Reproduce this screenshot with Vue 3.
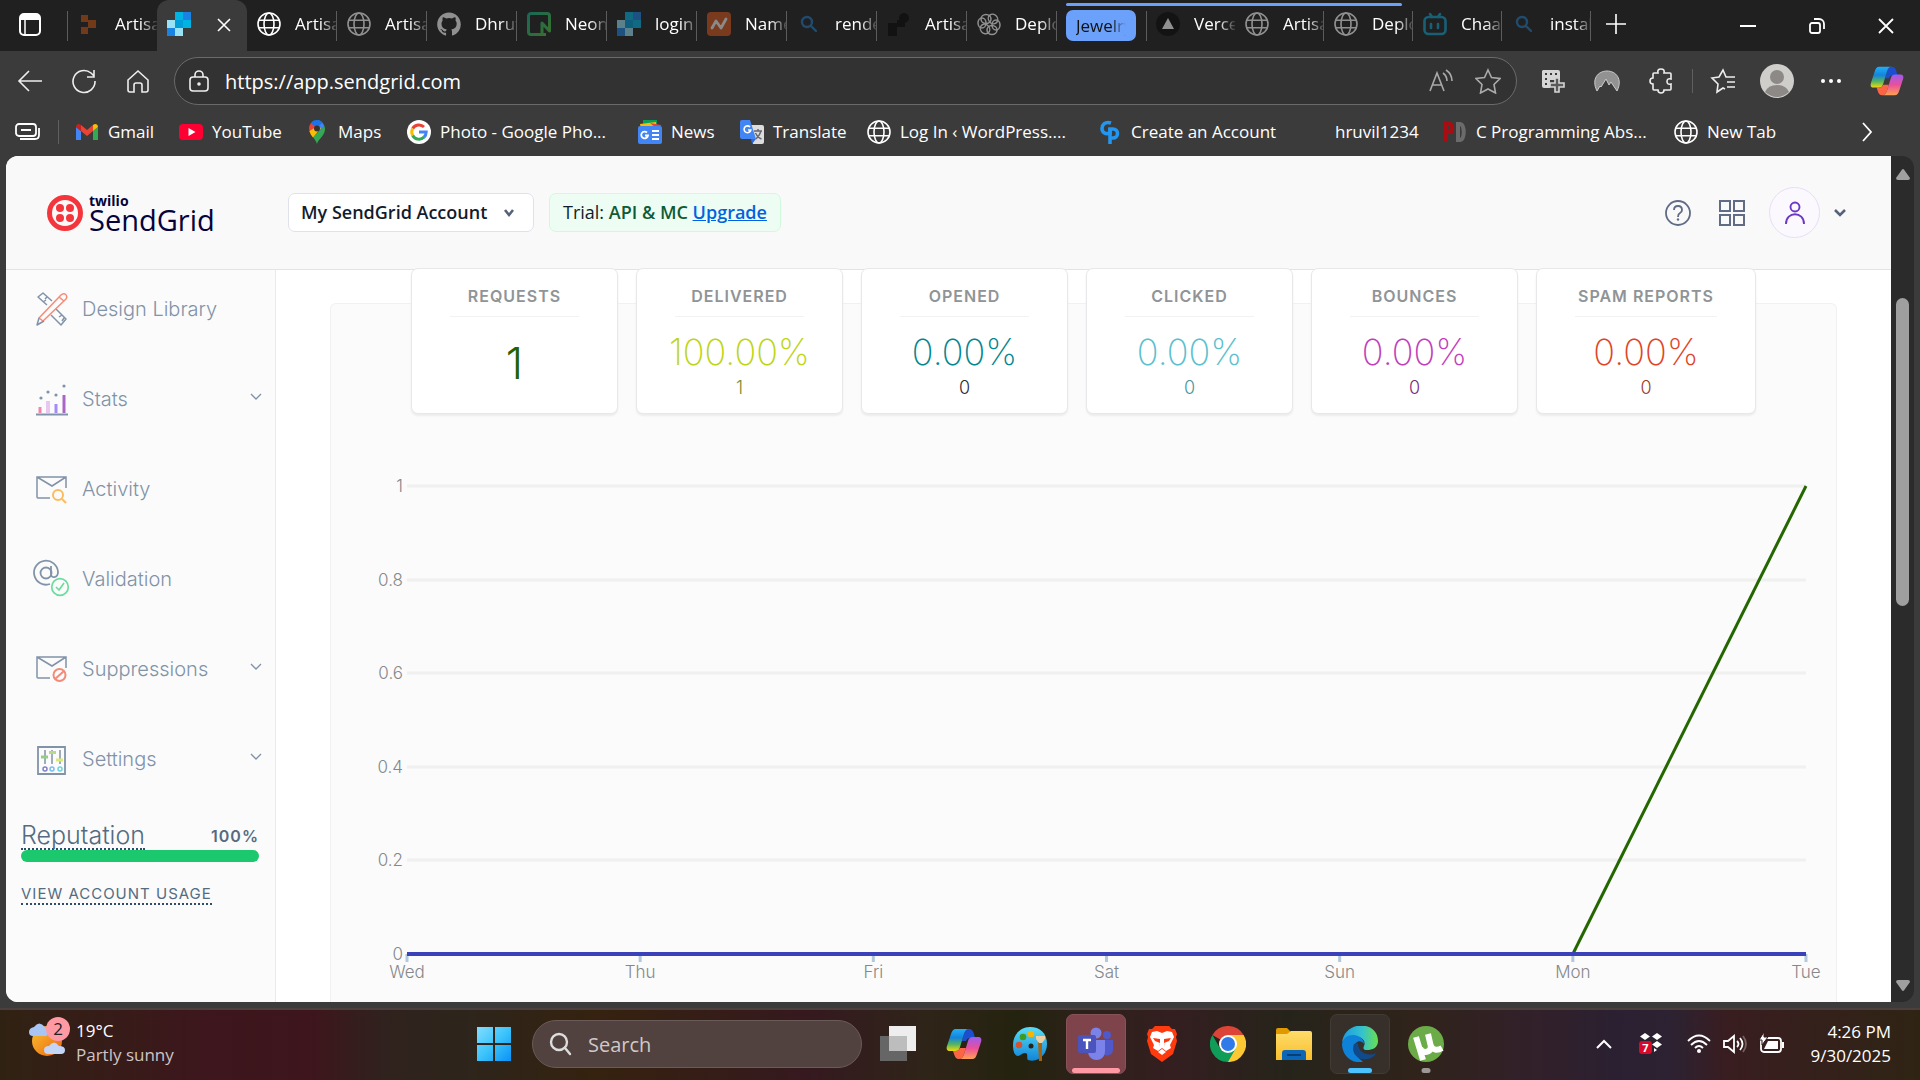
<script setup>
const globe = '<g fill="none" stroke="currentColor" stroke-width="1.6"><circle cx="12" cy="12" r="11"/><ellipse cx="12" cy="12" rx="5" ry="11"/><path d="M2 8.2h20M2 15.8h20"/></g>'
const grid = '<path fill="#1a82e2" d="M16 0h8v8h-8zM0 16h8v8H0z"/><path fill="#00b3e3" d="M8 0h8v8H8zM16 8h8v8h-8z"/><path fill="#009dd9" d="M8 8h8v8H8z"/><path fill="#99e1f4" d="M0 8h8v8H0zM8 16h8v8H8z"/>'
const search = '<g fill="none" stroke="#2277bb" stroke-width="2.4" stroke-linecap="round"><circle cx="10" cy="10" r="5"/><path d="M14 14l5 5"/></g>'
const copilot = '<path fill="#1b4fd0" d="M23 3c3 0 4 2 5 5l1 4h-5c-2 0-3 1-4 3h-4l2-7c1-3 2-5 5-5z"/><path fill="#fb6545" d="M13 33c-3 0-4-2-5-5l-1-3h2c3 0 4-1 5-3h6l-2 6c-1 3-2 5-5 5z"/><path fill="url(#cpA)" d="M10 3h13c-3 0-4 2-5 5l-4 13c-1 3-2 4-5 4H4c-3 0-4-2-3-5l4-12c1-3 2-5 5-5z"/><path fill="url(#cpB)" d="M26 33H13c3 0 4-2 5-5l4-13c1-3 2-4 5-4h5c3 0 4 2 3 5l-4 12c-1 3-2 5-5 5z"/>'

const icons = {
  globe, grid, search, copilot,
  render: '<path fill="#c65414" d="M4 3h7v7H4zM11 8h8v8h-8zM4 15h7v7H4z"/>',
  github: '<path fill="#fff" d="M12 .5C5.4.5.2 5.800.2 12.300c0 5.200 3.400 9.700 8.100 11.200.6.1.8-.2.8-.6v-2.200c-3.300.7-4-1.400-4-1.400-.5-1.400-1.300-1.700-1.300-1.700-1.100-.7.100-.7.100-.7 1.200.1 1.800 1.200 1.800 1.200 1 1.800 2.800 1.300 3.400 1 .1-.8.4-1.300.8-1.600-2.600-.3-5.400-1.300-5.400-5.900 0-1.300.5-2.400 1.200-3.200-.1-.3-.5-1.500.1-3.200 0 0 1-.3 3.300 1.200a11.400 11.400 0 0 1 6 0c2.300-1.500 3.300-1.200 3.300-1.200.6 1.700.2 2.900.1 3.200.8.8 1.200 1.900 1.200 3.200 0 4.600-2.800 5.600-5.500 5.900.4.4.8 1.100.8 2.200v3.300c0 .3.2.7.8.6a11.800 11.800 0 0 0 8-11.200C23.800 5.800 18.600.5 12 .5z"/>',
  neon: '<path fill="none" stroke="url(#neonG)" stroke-width="3" stroke-linejoin="round" d="M19 22.500H4a2.500 2.500 0 0 1-2.500-2.500V4A2.500 2.500 0 0 1 4 1.500h16A2.500 2.500 0 0 1 22.500 4v15L15 11v12"/>',
  name: '<rect width="24" height="24" rx="4" fill="#d2541c"/><path d="M5 16l4-7 5 7 5-9" fill="none" stroke="#f3f3f3" stroke-width="2.800" stroke-linecap="round" stroke-linejoin="round"/>',
  dark: '<path fill="#050505" d="M1 11h9v13H1zM10 8h8v7h-8z"/><circle cx="17" cy="6" r="5" fill="#050505"/>',
  openai: '<g fill="none" stroke="#fff" stroke-width="1.500"><ellipse cx="9" cy="7" rx="5" ry="4.500"/><ellipse cx="16" cy="7" rx="4.500" ry="5" transform="rotate(-40 16 7)"/><ellipse cx="19" cy="13" rx="4" ry="5"/><ellipse cx="15" cy="18" rx="5" ry="4.500"/><ellipse cx="8" cy="17" rx="4.500" ry="5" transform="rotate(-40 8 17)"/><ellipse cx="5" cy="11" rx="4" ry="5"/></g>',
  vercel: '<circle cx="12" cy="12" r="12" fill="#080808"/><path fill="#fff" d="M12 6l6 11H6z"/>',
  bili: '<g fill="none" stroke="#10a0cc" stroke-width="2.600" stroke-linecap="round"><rect x="1.500" y="5" width="21" height="17" rx="4"/><path d="M7 2l2 3M17 2l-2 3M8 12v4M15 12v4"/></g>',
  gmail: '<path fill="#4285f4" d="M1 20V7l5 4v9z"/><path fill="#34a853" d="M18 20v-9l5-4v13z"/><path fill="#ea4335" d="M6 11V5l6 5 6-5v6l-6 5z"/><path fill="#c5221f" d="M1 7c0-3 3-4 5-2v6z"/><path fill="#fbbc04" d="M23 7c0-3-3-4-5-2v6z"/>',
  youtube: '<rect y="4" width="24" height="16" rx="4" fill="#ff0033"/><path fill="#fff" d="M9.500 8l7 4-7 4z"/>',
  maps: '<path fill="#34a853" d="M12 24c1-5 8-8 8-15 0-1-.2-2-.6-3L8 17c2 3 3 4 4 7z"/><path fill="#4285f4" d="M12 0c3 0 6 2 7.400 6L14 12 9 6l5-6z"/><path fill="#1a73e8" d="M12 0c2 0 4 .8 5.400 2.500L9 11 5.600 3.500C7 1 9 0 12 0z"/><path fill="#ea4335" d="M5.800 3.300A8.500 8.500 0 0 0 4 9l1 3 6-5z"/><path fill="#fbbc04" d="M4.400 11c.6 2.600 2 4.400 3.600 6.500L16 8l-5-1z"/><circle cx="12" cy="8.500" r="3" fill="#333"/>',
  google: '<circle cx="12" cy="12" r="12" fill="#fff"/><g fill="none" stroke-width="3"><path stroke="#ea4335" d="M5.700 8.500A7.200 7.200 0 0 1 17 7"/><path stroke="#fbbc04" d="M5.700 15.500a7.200 7.200 0 0 1 0-7"/><path stroke="#34a853" d="M5.700 15.500A7.200 7.200 0 0 0 17 17.200"/><path stroke="#4285f4" d="M12 12h7.200a7.200 7.200 0 0 1-2.300 5.300"/></g>',
  news: '<path fill="#0c9d58" d="M5 0h14v8H5z"/><path fill="#fbbc04" d="M2 4l16-2v8H3z"/><path fill="#ea4335" d="M12 3l11 2-2 6z"/><rect y="6" width="24" height="18" rx="2" fill="#4285f4"/><path d="M14 11h7M14 15h7M14 19h7M9 12.500a3.400 3.400 0 1 0 1 3H7" stroke="#fff" stroke-width="1.800" fill="none"/>',
  translate: '<path fill="#ddd" d="M10 5h12a2 2 0 0 1 2 2v15a2 2 0 0 1-2 2h-9z"/><path fill="#4285f4" d="M2 0h8l6 19H2a2 2 0 0 1-2-2V2a2 2 0 0 1 2-2z"/><path fill="#3367d6" d="M11 19h5l-4 5z"/><path d="M10 7a3.400 3.400 0 1 0 .8 3H8" stroke="#fff" stroke-width="1.600" fill="none"/><path d="M14 11h8M18 9v2M21 11c-1 4-3 6-5 8M15.500 13c1 2 3 5 6 6" stroke="#667" stroke-width="1.500" fill="none"/>',
  gp: '<g fill="none" stroke="#2196f3" stroke-width="3.600"><path d="M13 3C7 1 4 5 4 8.500S7 15 12 13V8"/><path d="M12 24V9h3a4.500 4.500 0 1 1 0 9h-3"/></g>',
  blank: '',
  pd: '<path fill="none" stroke="#a90d12" stroke-width="4" d="M3 22V4h4c3 0 3 8 0 8H3"/><path fill="none" stroke="#6b6b6b" stroke-width="4" d="M15 4v16h2c5 0 5-16 0-16z"/>',
}

const tabsBefore = [
  { icon: 'render', title: 'Artisan', dim: true },
  { icon: 'grid', title: '', active: true },
  { icon: 'globe', title: 'Artisan' },
  { icon: 'globe', title: 'Artisan', dim: true },
  { icon: 'github', title: 'Dhruvil', dim: true },
  { icon: 'neon', title: 'Neon', dim: true },
  { icon: 'grid', title: 'login', dim: true },
  { icon: 'name', title: 'Name', dim: true },
  { icon: 'search', title: 'render', dim: true },
  { icon: 'dark', title: 'Artisan', dim: true },
  { icon: 'openai', title: 'Deploy', dim: true },
]
const tabsGroup = [
  { icon: 'vercel', title: 'Vercel', dim: true },
  { icon: 'globe', title: 'Artisan', dim: true },
  { icon: 'globe', title: 'Deploy', dim: true },
]
const tabsAfter = [
  { icon: 'bili', title: 'Chaarts', dim: true },
  { icon: 'search', title: 'install', dim: true },
]
const bookmarks = [
  { icon: 'gmail', title: 'Gmail', w: 104 },
  { icon: 'youtube', title: 'YouTube', w: 126 },
  { icon: 'maps', title: 'Maps', w: 102 },
  { icon: 'google', title: 'Photo - Google Pho...', w: 231 },
  { icon: 'news', title: 'News', w: 102 },
  { icon: 'translate', title: 'Translate', w: 127 },
  { icon: 'globe', title: 'Log In ‹ WordPress....', w: 231 },
  { icon: 'gp', title: 'Create an Account', w: 204 },
  { icon: 'blank', title: 'hruvil1234', w: 141 },
  { icon: 'pd', title: 'C Programming Abs...', w: 231 },
  { icon: 'globe', title: 'New Tab', w: 110 },
]

const envelope = '<path d="M35 21V10H6v20a1 1 0 0 0 1 1h12M6 10l15 9 14-9"/>'
const nav = [
  { title: 'Design Library', art: '<g stroke-linejoin="round"><path d="M16 18L7 10l5-4 9 8M25 22l10 10-5 6-10-10M12 15l3-2M14 12l2-2M28 30l3-2M31 34l2-3"/><path stroke="#f58b78" fill="#fbfbfb" d="M30 8L8 31l4 3L35 12q2-3-1-5-2-1-4 1zM28 10l5 4"/><path d="M8 31l-2 7 7-4"/></g>' },
  { title: 'Stats', sub: true, art: '<path d="M5 37.500h32" stroke-width="2"/><path d="M9 36V30" stroke="#f286ac" stroke-width="3"/><path d="M17 36V24" stroke="#e8c8f2" stroke-width="4"/><path d="M25 36v-9" stroke="#a58bfa" stroke-width="3"/><path d="M33 36V18" stroke="#aa66c4" stroke-width="3"/><g fill="#8193a8" stroke="none"><circle cx="10" cy="21" r="1.600"/><circle cx="17" cy="15" r="1.600"/><circle cx="25" cy="18" r="1.600"/><circle cx="33" cy="9" r="1.600"/></g>' },
  { title: 'Activity', art: envelope + '<g stroke="#fcbb5c" stroke-width="2"><circle cx="27" cy="28" r="5"/><path d="M31 32l4 4"/></g>' },
  { title: 'Validation', art: '<g stroke-width="1.800"><path d="M19 27A12 12 0 1 1 27 15c0 6-7 7-7 2v-8"/><circle cx="15" cy="16" r="5.500"/></g><g stroke="#6cdc9d" stroke-width="1.700"><circle cx="29" cy="30" r="8.300"/><path d="M25 30l3 3 5-7"/></g>' },
  { title: 'Suppressions', sub: true, art: envelope + '<g stroke="#f28c78" stroke-width="2"><circle cx="28.500" cy="28" r="6"/><path d="M24 32l9-8"/></g>' },
  { title: 'Settings', sub: true, art: '<path d="M7 10h27v27H7z" stroke-width="1.800"/><path d="M14 13v14M21 13v14M29 13v14"/><path d="M10 20h7" stroke="#92cf86" stroke-width="3"/><path d="M18 15.500h7" stroke="#b8da87" stroke-width="3"/><path d="M25 23h7" stroke="#dce878" stroke-width="3"/><circle cx="14" cy="32" r="2" stroke="#8080ca"/><circle cx="21" cy="32" r="2" stroke="#79bdf2"/><circle cx="29" cy="32" r="2" stroke="#68d6dc"/>' },
]

const stats = [
  { label: 'Requests', value: '1', color: '#246100', single: true },
  { label: 'Delivered', value: '100.00%', count: '1', color: '#bcd514', tone: '#7f8c30' },
  { label: 'Opened', value: '0.00%', count: '0', color: '#028690', tone: '#302b3a' },
  { label: 'Clicked', value: '0.00%', count: '0', color: '#59c0cf', tone: '#4b97a0' },
  { label: 'Bounces', value: '0.00%', count: '0', color: '#bf3ebc', tone: '#7c2c7a' },
  { label: 'Spam Reports', value: '0.00%', count: '0', color: '#e04427', tone: '#97402f', wide: true },
]
const days = ['Wed', 'Thu', 'Fri', 'Sat', 'Sun', 'Mon', 'Tue']
const levels = ['1', '0.8', '0.6', '0.4', '0.2', '0']
const plotH = 468
const levelY = (i) => Math.round((plotH * i) / 5)
const dayX = (i) => (i * 100) / 6 + '%'

const apps = [
  { name: 'Task View', art: '<path fill="#666" d="M0 10h27v25H0z"/><path fill="#eee" d="M9 0h27v25H9z"/><path fill="#bdbdbd" d="M9 10h18v15H9z"/>' },
  { name: 'Copilot', art: copilot },
  { name: 'Paint', art: '<path fill="url(#paintG)" d="M18 1C8 1 1 9 1 19c0 7 2 11 5 11 2 0 4-3 7-3 4 0 1 5 3 7 10 3 19-5 19-16S28 1 18 1z"/><circle cx="19" cy="20" r="2.500" fill="#26241c"/><circle cx="7" cy="19" r="3.300" fill="#d9502b"/><circle cx="11" cy="11" r="3.300" fill="#3e9b22"/><circle cx="19" cy="8" r="3.300" fill="#f7b500"/><path fill="#a8620e" d="M26 15h4v20h-3z"/><path fill="#ecd0a5" d="M24 10h9v3l-3 4h-3l-3-4z"/>' },
  { name: 'Teams', state: 'alert', art: '<circle cx="29" cy="9" r="4" fill="#5059c9"/><path fill="#5059c9" d="M24 14h11v9c0 8-9 8-11 3z"/><circle cx="18" cy="7" r="5.500" fill="#7b83eb"/><path fill="#7b83eb" d="M10 14h17v11c0 12-17 12-17 0z"/><rect y="9" width="18" height="18" rx="2" fill="#4b53bc"/><path stroke="#fff" stroke-width="2.400" d="M5 14h8M9 14v9"/>' },
  { name: 'Brave', art: '<path fill="#ff3a0e" d="M11 0h14l3 3 3 0 2 5-1 3 1 4-4 13-11 8-11-8L3 15l1-4-1-3 2-5h3z"/><path fill="#fff" d="M18 7l5-2 5 1 2 5-4 8 1 3-5 3-4-3-4 3-5-3 1-3-4-8 2-5 5-1zM18 23l4 3-4 3-4-3z"/><path fill="#ff3a0e" d="M9 12l7 1 0 5-1 3 1-4-5-2zM27 12l-7 1 0 5 1 3-1-4 5-2z"/>' },
  { name: 'Chrome', art: '<path fill="#db4437" d="M18 18L2.400 9a18 18 0 0 1 31.200 0z"/><path fill="#fcc934" d="M18 9h15.600A18 18 0 0 1 17 36l8-14z"/><path fill="#0f9d58" d="M2.400 9l8 14 8 4 7-4-7.400 13A18 18 0 0 1 2.400 9z"/><circle cx="18" cy="18" r="9" fill="#fff"/><circle cx="18" cy="18" r="7" fill="#2f7ae8"/>' },
  { name: 'File Explorer', art: '<path fill="#e09a00" d="M0 4q0-2 2-2h9l4 4-4 4H0z"/><path fill="url(#foldG)" d="M0 8h11l4-3h19q2 0 2 2v27H0z"/><path fill="#0c66b8" d="M6 34V27q0-3 3-3h18q3 0 3 3v7z"/><path stroke="#0a3d73" stroke-width="2" d="M11 29h14"/>' },
  { name: 'Edge', state: 'current', art: '<path fill="url(#edgeG)" d="M0 17C2-6 36-6 36 15c0 7-6 9-11 9-4 0-4-2-3-4 2-4-1-9-7-9C7 11 1 13 0 17z"/><path fill="#0d82d8" d="M0 18c1-6 6-9 11-9 6 0 11 4 11 9-3-5-9-3-10 3-1 7 5 11 9 15C9 38 0 29 0 18z"/><path fill="#114a8b" d="M12 18c-4 9 5 19 17 14 2-1 4-3 5-5-8 4-18 0-18-10z"/>' },
  { name: 'uTorrent', state: 'idle', art: '<circle cx="18" cy="18" r="18" fill="#6cac48"/><path fill="none" stroke="#fff" stroke-width="6" d="M8 11l7 23M12 22c2 6 10 5 11-1l-3-13M23 20c2 4 6 5 11 2"/>' },
]
</script>

<template>
  <div class="desktop">
    <svg class="defs" aria-hidden="true">
      <defs>
        <linearGradient id="cpA" x1="0" y1="0" x2="0" y2="1"><stop offset="0" stop-color="#1fb0f8" /><stop offset=".4" stop-color="#1483dc" /><stop offset=".7" stop-color="#55b560" /><stop offset="1" stop-color="#f5d90e" /></linearGradient>
        <linearGradient id="cpB" x1="0" y1="0" x2="0" y2="1"><stop offset="0" stop-color="#9a5cf0" /><stop offset=".5" stop-color="#e94f9c" /><stop offset="1" stop-color="#ffa052" /></linearGradient>
        <linearGradient id="neonG" x1="0" y1="0" x2="1" y2="1"><stop offset="0" stop-color="#15b08c" /><stop offset="1" stop-color="#52c13d" /></linearGradient>
        <linearGradient id="paintG" x1="0" y1="0" x2="0" y2="1"><stop offset="0" stop-color="#5adcf5" /><stop offset="1" stop-color="#1086d8" /></linearGradient>
        <linearGradient id="foldG" x1="0" y1="0" x2="0" y2="1"><stop offset="0" stop-color="#ffdc6b" /><stop offset="1" stop-color="#f8bf2c" /></linearGradient>
        <linearGradient id="edgeG" x1="0" y1="0" x2="1" y2="0"><stop offset="0" stop-color="#1a9be0" /><stop offset=".55" stop-color="#35c1d0" /><stop offset="1" stop-color="#68e04d" /></linearGradient>
        <linearGradient id="winG" x1="0" y1="0" x2="1" y2="1"><stop offset="0" stop-color="#83ddff" /><stop offset=".5" stop-color="#3cc4fb" /><stop offset="1" stop-color="#0a92f7" /></linearGradient>
        <linearGradient id="sunG" x1="0" y1="0" x2="1" y2="1"><stop offset="0" stop-color="#f7c331" /><stop offset="1" stop-color="#ee6410" /></linearGradient>
      </defs>
    </svg>

    <header class="tabstrip">
      <button class="tab-menu" aria-label="Tab actions">
        <svg width="22" height="28" viewBox="0 0 22 28"><rect x="1" y="3" width="20" height="21" rx="4" fill="none" stroke="#fff" stroke-width="2" /><path fill="#fff" d="M1 4h20v5H1z" /><path stroke="#fff" stroke-width="1.500" d="M6 8v15" /></svg>
      </button>
      <button v-for="(t, i) in tabsBefore" :key="'b' + i" class="tab" :class="{ active: t.active, dim: t.dim }" :aria-label="t.title || 'SendGrid'">
        <svg width="24" height="24" viewBox="0 0 24 24" v-html="icons[t.icon]"></svg>
        <svg v-if="t.active" class="tab-close" width="14" height="14" viewBox="0 0 14 14"><path d="M1 1l12 12M13 1L1 13" stroke="#fff" stroke-width="1.600" /></svg>
        <span v-else class="tab-title">{{ t.title }}</span>
      </button>
      <div class="tab-group">
        <button class="group-pill"><span>Jewelry</span></button>
        <button v-for="(t, i) in tabsGroup" :key="'g' + i" class="tab grouped" :class="{ dim: t.dim }">
          <svg width="24" height="24" viewBox="0 0 24 24" v-html="icons[t.icon]"></svg>
          <span class="tab-title">{{ t.title }}</span>
        </button>
      </div>
      <button v-for="(t, i) in tabsAfter" :key="'a' + i" class="tab grouped" :class="{ dim: t.dim }">
        <svg width="24" height="24" viewBox="0 0 24 24" v-html="icons[t.icon]"></svg>
        <span class="tab-title">{{ t.title }}</span>
      </button>
      <button class="new-tab" aria-label="New tab"><svg width="22" height="22" viewBox="0 0 22 22"><path d="M11 1v20M1 11h20" stroke="#fff" stroke-width="1.600" /></svg></button>
      <div class="window-controls">
        <button aria-label="Minimize"><svg width="16" height="16" viewBox="0 0 16 16"><path d="M0 8h16" stroke="#fff" stroke-width="2" /></svg></button>
        <button aria-label="Restore"><svg width="16" height="16" viewBox="0 0 16 16"><g fill="none" stroke="#fff" stroke-width="1.800"><rect x="1" y="5" width="10" height="10" rx="2" /><path d="M5 1h5a5 5 0 0 1 5 5v5" /></g></svg></button>
        <button aria-label="Close"><svg width="16" height="16" viewBox="0 0 16 16"><path d="M1 1l14 14M15 1L1 15" stroke="#fff" stroke-width="1.800" /></svg></button>
      </div>
    </header>

    <div class="toolbar">
      <button class="tool" aria-label="Back"><svg width="26" height="26" viewBox="0 0 26 26"><path d="M25 13H2M12 3L2 13l10 10" /></svg></button>
      <button class="tool" aria-label="Refresh"><svg width="26" height="26" viewBox="0 0 26 26"><path d="M24 13A11 11 0 1 1 20 5l3 3M23 2v7h-7" /></svg></button>
      <button class="tool" aria-label="Home"><svg width="26" height="26" viewBox="0 0 26 26"><path d="M3 12L13 3l10 9v10q0 2-2 2h-4v-7q0-2-2-2h-4q-2 0-2 2v7H5q-2 0-2-2z" /></svg></button>
      <label class="address">
        <svg width="20" height="22" viewBox="0 0 20 22"><rect x="1" y="7" width="18" height="14" rx="3" /><path d="M6 7V5a4 4 0 0 1 8 0v2" /><circle cx="10" cy="14" r="1" fill="#ddd" /></svg>
        <input type="text" value="https://app.sendgrid.com" aria-label="Address" />
        <svg class="soft" width="24" height="24" viewBox="0 0 24 24"><path d="M1 22L8 4l7 18M4 16h9M14 4q4 3 4 8M17 1q6 4 6 11" /></svg>
        <svg class="soft" width="26" height="26" viewBox="0 0 26 26"><path d="M13 2l3.500 7.500 8.500 1-6 6 1.500 8.500L13 21l-7.500 4L7 16.500l-6-6 8.500-1z" /></svg>
      </label>
      <div class="extensions">
        <button class="tool" aria-label="Screenshot"><svg width="24" height="24" viewBox="0 0 24 24"><path fill="#d6d6d6" stroke="none" d="M2 1h15q2 0 2 2v8H9v8H3q-2 0-2-2V2z" /><path fill="#3b3b3b" stroke="none" d="M4 4h2v2H4zM9 4h2v2H9zM14 4h2v2h-2zM4 9h2v2H4zM4 14h2v2H4z" /><path fill="#5a5a5a" stroke="#d6d6d6" d="M14 9h4v5h5v4h-5v5h-4v-5H9v-4h5z" /></svg></button>
        <button class="tool" aria-label="VPN"><svg width="26" height="24" viewBox="0 0 26 24"><path fill="#929292" stroke="#ccc" stroke-width="1" d="M3 22C-3 10 4 2 13 2s16 8 10 20l-6-9-2 3-3-6-5 8-1-1z" /></svg></button>
        <button class="tool" aria-label="Extensions"><svg width="24" height="26" viewBox="0 0 24 26"><path d="M5 5h4q-1-4 3-4t3 4h6q1 0 1 1v5q-4-1-4 2.500t4 2.500v5q0 1-1 1h-6q0 3-3 3t-3-3H5q-1 0-1-1v-5q-3 0-3-3t3-3V6q0-1 1-1z" /></svg></button>
        <span class="rule"></span>
        <button class="tool" aria-label="Favorites"><svg width="26" height="26" viewBox="0 0 26 26"><path d="M15 21l-2-1-6 4 1-8-6-6 7-1 4-7 3 7 2 0M17 9h8M17 14h8M17 19h8" /></svg></button>
        <button class="tool" aria-label="Profile"><svg width="34" height="34" viewBox="0 0 34 34"><circle cx="17" cy="17" r="17" fill="#cfcecb" stroke="none" /><circle cx="17" cy="13" r="7" fill="#8c8986" stroke="none" /><path fill="#8c8986" stroke="none" d="M5 28q3-7 12-7t12 7q-12 10-24 0z" /></svg></button>
        <button class="tool" aria-label="More"><svg width="22" height="6" viewBox="0 0 22 6"><g fill="#fff" stroke="none"><circle cx="3" cy="3" r="2" /><circle cx="11" cy="3" r="2" /><circle cx="19" cy="3" r="2" /></g></svg></button>
        <button class="tool plain" aria-label="Copilot"><svg width="34" height="34" viewBox="0 0 36 36" v-html="copilot"></svg></button>
      </div>
    </div>

    <nav class="bookmarks" aria-label="Favorites bar">
      <button class="workspace" aria-label="Workspaces"><svg width="26" height="20" viewBox="0 0 26 20"><g fill="none" stroke="#fff" stroke-width="1.800"><rect x="1" y="2" width="20" height="12" rx="3" /><path d="M5 17h15q4 0 4-4V6M6 8h10" /></g></svg></button>
      <a v-for="b in bookmarks" :key="b.title" href="#" :style="{ width: b.w + 'px' }">
        <svg width="24" height="24" viewBox="0 0 24 24" v-html="icons[b.icon]"></svg><span>{{ b.title }}</span>
      </a>
      <button class="more" aria-label="More favorites"><svg width="12" height="20" viewBox="0 0 12 20"><path d="M2 1l8 9-8 9" fill="none" stroke="#fff" stroke-width="1.800" /></svg></button>
    </nav>

    <div class="viewport">
      <div class="page">
        <header class="app-header">
          <a class="logo" href="#" aria-label="Twilio SendGrid">
            <svg width="36" height="36" viewBox="0 0 36 36"><circle cx="18" cy="18" r="15.500" fill="none" stroke="#f4353b" stroke-width="5" /><g fill="#f4353b"><circle cx="13" cy="13" r="4" /><circle cx="23" cy="13" r="4" /><circle cx="13" cy="23" r="4" /><circle cx="23" cy="23" r="4" /></g></svg>
            <span class="wordmark"><b>twilio</b><span>SendGrid</span></span>
          </a>
          <label class="account">
            <select aria-label="Account"><option>My SendGrid Account</option></select>
            <svg width="12" height="10" viewBox="0 0 12 10"><path d="M2 2l4 5 4-5" /></svg>
          </label>
          <p class="trial">Trial: <b>API &amp; MC</b> <a href="#">Upgrade</a></p>
          <div class="header-actions">
            <button aria-label="Help"><svg width="26" height="26" viewBox="0 0 26 26"><g fill="none" stroke="#606b85" stroke-width="1.800"><circle cx="13" cy="13" r="12" /><path d="M9 10q0-4 4-4t4 4q0 2-2 3t-2 4" /></g><circle cx="13" cy="19.500" r="1.200" fill="#606b85" /></svg></button>
            <button aria-label="Products"><svg width="28" height="28" viewBox="0 0 28 28"><path fill="none" stroke="#606b85" stroke-width="2" d="M2 2h10v10H2zM16 2h10v10H16zM2 16h10v10H2zM16 16h10v10H16z" /></svg></button>
            <button class="avatar" aria-label="Account menu"><svg width="22" height="24" viewBox="0 0 22 24"><g fill="none" stroke="#6b37c8" stroke-width="1.900"><circle cx="11" cy="6" r="4.500" /><path d="M2 23c0-13 18-13 18 0" /></g></svg></button>
            <svg class="caret" width="14" height="10" viewBox="0 0 14 10"><path d="M2 2l5 5 5-5" /></svg>
          </div>
        </header>

        <div class="app-body">
          <aside class="sidebar">
            <nav>
              <a v-for="n in nav" :key="n.title" href="#">
                <svg class="nav-icon" width="40" height="44" viewBox="0 0 40 44" v-html="n.art"></svg>
                <span>{{ n.title }}</span>
                <svg v-if="n.sub" class="nav-caret" width="12" height="10" viewBox="0 0 12 10"><path d="M1 2l5 5 5-5" /></svg>
              </a>
            </nav>
            <section class="reputation">
              <div class="rep-head"><a href="#">Reputation</a><strong>100%</strong></div>
              <div class="rep-bar"></div>
              <a class="usage" href="#">VIEW ACCOUNT USAGE</a>
            </section>
          </aside>

          <main class="content">
            <section class="panel">
              <div class="cards">
                <article v-for="s in stats" :key="s.label" class="card" :class="{ wide: s.wide }">
                  <h2>{{ s.label }}</h2>
                  <p class="value" :class="{ single: s.single }" :style="{ color: s.color }">{{ s.value }}</p>
                  <p v-if="s.count" class="count" :style="{ color: s.tone }">{{ s.count }}</p>
                </article>
              </div>
              <svg class="chart" width="100%" height="500" role="img" aria-label="Email activity">
                <g v-for="(l, i) in levels" :key="l">
                  <line x1="0" x2="100%" :y1="levelY(i)" :y2="levelY(i)" stroke="#f0f0f0" stroke-width="3" />
                  <text x="-4" :y="levelY(i) + 6" text-anchor="end">{{ l }}</text>
                </g>
                <g v-for="(d, i) in days" :key="d">
                  <line :x1="dayX(i)" :x2="dayX(i)" :y1="plotH" :y2="plotH + 8" stroke="#b1c8dd" stroke-width="3" />
                  <text :x="dayX(i)" :y="plotH + 24" text-anchor="middle">{{ d }}</text>
                </g>
                <line :x1="dayX(5)" :y1="plotH" x2="100%" y2="0" stroke="#246600" stroke-width="3" />
                <line x1="0" x2="100%" :y1="plotH" :y2="plotH" stroke="#3b41b8" stroke-width="4" />
              </svg>
            </section>
          </main>
        </div>
      </div>
      <div class="scrollbar" aria-hidden="true">
        <svg width="14" height="11" viewBox="0 0 14 11"><path fill="#a0a0a0" d="M7 0q1 0 2 2l5 7q0 2-2 2H2q-2 0-2-2l5-7q1-2 2-2z" /></svg>
        <span class="thumb"></span>
        <svg width="14" height="11" viewBox="0 0 14 11"><path fill="#a0a0a0" d="M7 11q1 0 2-2l5-7q0-2-2-2H2Q0 0 0 2l5 7q1 2 2 2z" /></svg>
      </div>
    </div>

    <footer class="taskbar">
      <button class="weather">
        <span class="weather-icon">
          <svg width="38" height="38" viewBox="0 0 38 38"><circle cx="18" cy="18" r="15" fill="url(#sunG)" /><path fill="#a9c5f4" d="M4 13q-4 0-4-4t5-5q5-7 11 0 6 9-1 9z" /><path fill="#c3d6f7" d="M19 31q-4 0-4-4t5-4q5-7 10 0 6 0 6 4t-4 4z" /></svg>
          <span class="badge">2</span>
        </span>
        <span class="weather-text"><span>19°C</span><small>Partly sunny</small></span>
      </button>
      <div class="dock">
        <button class="app" aria-label="Start"><svg width="36" height="36" viewBox="0 0 36 36"><path fill="url(#winG)" d="M1 1h16v16H1zM19 1h16v16H19zM1 19h16v16H1zM19 19h16v16H19z" /></svg></button>
        <label class="search">
          <svg width="24" height="24" viewBox="0 0 24 24"><g fill="none" stroke="#ddd" stroke-width="2.400" stroke-linecap="round"><circle cx="10" cy="10" r="8" /><path d="M16 16l5 6" /></g></svg>
          <input type="text" placeholder="Search" aria-label="Search" />
        </label>
        <button v-for="a in apps" :key="a.name" class="app" :class="a.state" :aria-label="a.name">
          <svg width="36" height="36" viewBox="0 0 36 36" v-html="a.art"></svg>
        </button>
      </div>
      <div class="tray">
        <svg width="16" height="10" viewBox="0 0 16 10"><path d="M1 9l7-7 7 7" fill="none" stroke="#fff" stroke-width="2" /></svg>
        <span class="dropbox">
          <svg width="24" height="24" viewBox="0 0 24 24"><path fill="#fff" d="M6 1l5 3.500L6 8 1 4.500zM18 1l5 3.500L18 8l-5-3.500zM18 9l5 3.500-5 3.500-5-3.500zM15 16l3 2-3 2z" /></svg>
          <b>7</b>
        </span>
        <span class="status">
          <svg width="24" height="24" viewBox="0 0 24 24"><g fill="none" stroke="#fff" stroke-width="1.800"><path d="M1 9q11-11 22 0M4 13q8-8 16 0M8 16q4-4 8 0" /></g><circle cx="12" cy="19" r="2" fill="#fff" /></svg>
          <svg width="24" height="24" viewBox="0 0 24 24"><g fill="none" stroke="#fff" stroke-width="1.800"><path d="M1 9v6h4l6 5V4L5 9zM14 9q3 3 0 6M17 6q5 6 0 12" /><path opacity=".3" d="M20 4q6 8 0 16" /></g></svg>
          <svg width="26" height="24" viewBox="0 0 26 24"><rect x="2" y="6" width="20" height="14" rx="3" fill="none" stroke="#fff" stroke-width="1.800" /><path fill="#fff" d="M9 9h10v8H5zM23 10h2v6h-2z" /><path fill="#fff" stroke="#2e1c1a" d="M5 0v5h4L3 13V8H0z" /></svg>
        </span>
        <span class="clock"><span>4:26 PM</span><span>9/30/2025</span></span>
      </div>
    </footer>
  </div>
</template>

<style>
body { margin: 0; }
</style>

<style scoped>
* { box-sizing: border-box; }
button { border: 0; padding: 0; background: none; color: inherit; font: inherit; }
a { color: inherit; text-decoration: none; }
p, h2 { margin: 0; }
svg { flex: none; display: block; }
.defs { position: absolute; width: 0; height: 0; }

.desktop { min-height: 100vh; display: flex; flex-direction: column; background: #3b3b3b; color: #fff; font-family: "Open Sans", "Noto Sans", sans-serif; font-size: 17px; overflow: hidden; }

.tabstrip { height: 51px; display: flex; background: #202020; }
.tab-menu { width: 67px; padding: 10px 0 0 19px; }
.tab-menu svg { margin-bottom: 12px; }
.tab { position: relative; width: 90px; padding: 0 0 4px 10px; display: flex; align-items: center; gap: 14px; white-space: nowrap; }
.tab.grouped { width: 89px; }
.tab::after { content: ""; position: absolute; right: 0; top: 11px; width: 1px; height: 30px; background: #5c5c5c; }
.tab:nth-child(2)::before { content: ""; position: absolute; left: 0; top: 11px; width: 1px; height: 30px; background: #5c5c5c; }
.tab:nth-child(2)::after, .tab.active::after { display: none; }
.tab.dim > svg { opacity: 0.5; }
.tab-title { flex: 1; overflow: hidden; text-align: left; mask-image: linear-gradient(90deg, #000 60%, transparent 105%); }
.tab.active { background: #3b3b3b; border-radius: 12px 12px 0 0; gap: 26px; }
.tab-close { margin-top: 3px; }
.tab-group { position: relative; display: flex; }
.tab-group::before { content: ""; position: absolute; left: 9px; right: 11px; top: 3px; height: 3px; border-radius: 2px; background: #6ba1fb; }
.group-pill { width: 70px; height: 31px; margin: 10px 10px 0 9px; padding: 0 10px; overflow: hidden; border-radius: 7px; background: #6ba1fb; color: #111; text-align: left; }
.group-pill span { display: block; overflow: hidden; mask-image: linear-gradient(90deg, #000 70%, transparent); }
.new-tab { padding: 0 14px 4px; }
.window-controls { display: flex; margin-left: auto; }
.window-controls button { width: 69px; display: grid; place-items: center; }

.toolbar { display: flex; align-items: center; height: 60px; padding: 0 5px 0 3px; }
.tool { width: 54px; height: 48px; display: grid; place-items: center; }
.tool svg, .address svg { fill: none; stroke: #eee; stroke-width: 1.6; }
.tool.plain { width: 57px; }
.tool.plain svg { stroke: none; }
.address { flex: 1; height: 48px; margin: 0 9px; padding: 0 15px 0 14px; display: flex; align-items: center; border: 1px solid #6a6a6a; border-radius: 24px; background: #323232; }
.address input { flex: 1; min-width: 0; margin-left: 16px; padding: 0; border: 0; outline: 0; background: none; color: #fff; font: inherit; font-size: 20px; }
.address .soft { stroke: #aaa; margin-left: 22px; }
.extensions { display: flex; align-items: center; }
.rule { width: 1px; height: 24px; margin: 0 3px 0 4px; background: #5f5f5f; }

.bookmarks { display: flex; align-items: center; height: 45px; padding: 0 43px 4px 0; }
.workspace { width: 59px; height: 24px; margin-right: 16px; padding-left: 15px; border-right: 1px solid #5f5f5f; }
.bookmarks a { display: flex; align-items: center; gap: 9px; white-space: nowrap; }
.more { margin-left: auto; padding: 4px; }

.viewport { flex: 1; display: flex; padding: 0 6px 6px; }
.page { flex: 1; min-width: 0; display: flex; flex-direction: column; overflow: hidden; border-radius: 12px 0 0 12px; background: #fff; }
.scrollbar { width: 23px; display: flex; flex-direction: column; align-items: center; padding: 13px 0 11px; border-radius: 0 12px 12px 0; background: #2b2b2b; }
.thumb { width: 13px; height: 308px; margin-top: 118px; margin-bottom: auto; border-radius: 7px; background: #9f9f9f; }

.app-header { display: flex; align-items: center; height: 114px; padding: 0 44px 0 41px; border-bottom: 1px solid #e1e3ea; background: #f9f9fa; color: #121c2d; font-size: 18px; }
.logo { width: 241px; display: flex; gap: 6px; color: #06033a; align-items: center; }
.wordmark { display: flex; flex-direction: column; }
.wordmark b { font-size: 14px; line-height: 14px; font-weight: 700; }
.wordmark span { font-size: 29px; line-height: 24px; }
.account { position: relative; width: 246px; }
.account select { width: 100%; height: 39px; padding: 0 12px 1px; appearance: none; border: 1px solid #dfe2eb; border-radius: 7px; background: #fff; color: #121c2d; font: inherit; font-weight: 600; }
.account svg { position: absolute; right: 19px; top: 15px; }
.account svg, .caret { fill: none; stroke: #56617b; stroke-width: 2.6; }
.trial { height: 39px; margin-left: 15px; padding: 0 13px; border: 1px solid #d0fadd; border-radius: 7px; background: #edfdf3; line-height: 36px; white-space: nowrap; }
.trial b { color: #0e5b35; font-weight: 600; }
.trial a { color: #0263e0; font-weight: 600; text-decoration: underline; }
.header-actions { display: flex; align-items: center; margin-left: auto; }
.header-actions button { margin-right: 27px; }
.header-actions .avatar { width: 51px; height: 51px; margin: 0 13px 0 -4px; display: grid; place-items: center; border: 1px solid #e7dcfa; border-radius: 50%; background: #fbf9fe; }

.app-body { flex: 1; display: flex; font-family: Inter, Roboto, sans-serif; }
.sidebar { width: 270px; padding: 9px 0 0; border-right: 1px solid #e9eaec; background: #fbfbfb; color: #8193a8; }
.sidebar nav { display: flex; flex-direction: column; gap: 30px; }
.sidebar nav a { height: 60px; display: flex; align-items: center; padding: 0 13px 0 25px; font-size: 20px; font-weight: 300; }
.nav-icon { margin-right: 11px; overflow: visible; fill: none; stroke: #8193a8; stroke-width: 1.5; }
.nav-caret { margin: 0 0 5px auto; fill: none; stroke: #8193a8; stroke-width: 1.4; }
.reputation { padding: 33px 16px 0 15px; color: #546b81; }
.rep-head { display: flex; justify-content: space-between; align-items: center; }
.rep-head a { font-size: 25px; line-height: 26px; font-weight: 300; border-bottom: 2px dotted #2f4c6b; }
.rep-head strong { font-size: 16px; font-weight: 600; letter-spacing: 1px; }
.rep-bar { height: 12px; border-radius: 6px; background: #1bc86d; }
.usage { display: inline-block; margin-top: 22px; border-bottom: 2px dotted #2f4c6b; font-size: 15px; line-height: 19px; letter-spacing: 1px; }

.content { flex: 1; min-width: 0; display: flex; padding: 33px 54px 0; }
.panel { flex: 1; min-width: 0; padding: 0 30px 0 76px; border: 1px solid #f1f1f2; border-bottom: 0; border-radius: 6px 6px 0 0; background: #fbfbfb; }
.cards { display: flex; gap: 18px; margin: -36px 50px 72px 4px; }
.card { flex: 207 1 0; min-width: 0; height: 146px; padding: 17px 0 0; border: 1px solid #e8e8ea; border-radius: 7px; background: #fff; box-shadow: 0 2px 2px #ececec; text-align: center; }
.card.wide { flex-grow: 220; }
.card h2 { height: 31px; margin: 0 38px; display: flex; justify-content: center; border-bottom: 1px solid #f2f2f2; color: #8f9496; font-size: 16px; line-height: 20px; font-weight: 600; letter-spacing: 1px; text-transform: uppercase; white-space: nowrap; }
.value { margin-top: 14px; font-size: 36px; line-height: 42px; font-weight: 200; }
.value.single { margin-top: 22px; font-size: 44px; line-height: 48px; font-weight: 300; }
.count { margin-top: 2px; font-size: 18px; line-height: 26px; font-weight: 300; }
.chart { overflow: visible; }
.chart text { fill: #85888b; font-size: 17px; font-weight: 300; }

.taskbar { position: relative; height: 72px; display: flex; align-items: center; justify-content: center; padding-bottom: 2px; border-top: 2px solid #4b403e; background: linear-gradient(90deg, #302213 0, #3c171c 10%, #3e151c 16%, #30221e 20%, #2d251c 24%, #35220f 31%, #35191f 42%, #2f2419 48%, #24230f 53%, #2d211b 57%, #341e20 61%, #26241a 67%, #30231b 74%, #32202a 80%, #2b2031 84%, #2c2232 87%, #391d20 90%, #35201c 94%, #2f2414 100%); font-size: 17px; }
.weather { position: absolute; left: 29px; top: 7px; display: flex; gap: 9px; text-align: left; }
.weather-icon { position: relative; padding-top: 6px; }
.badge { position: absolute; left: 17px; top: 0; width: 24px; height: 24px; border-radius: 50%; background: #ff99a4; color: #222; line-height: 24px; text-align: center; }
.weather-text { display: flex; flex-direction: column; line-height: 24px; padding-top: 2px; }
.weather-text small { font-size: 17px; color: #cdc5c6; }
.dock { display: flex; align-items: center; gap: 6px; }
.app { position: relative; width: 60px; height: 60px; display: grid; place-items: center; border: 1px solid transparent; border-radius: 7px; }
.app.alert { background: #7f434b; border-color: #89515a; }
.app.current { background: #37302a; border-color: #413b36; }
.app::after { content: ""; position: absolute; bottom: 0; height: 5px; border-radius: 3px; left: 50%; transform: translateX(-50%); }
.app.alert::after { width: 48px; background: #ff99a4; }
.app.current::after { width: 24px; background: #4cc2ff; }
.app.idle::after { width: 9px; background: #9d9795; }
.search { width: 330px; height: 48px; margin-left: 2px; padding: 0 16px; display: flex; align-items: center; gap: 15px; border: 1px solid #6a5b58; border-radius: 24px; background: #51413f; }
.search input { flex: 1; min-width: 0; padding: 0; border: 0; outline: 0; background: none; font: inherit; font-size: 20px; color: #ddd; }
.search input::placeholder { color: #d0c9c8; opacity: 1; }
.tray { position: absolute; right: 29px; top: 10px; display: flex; align-items: center; }
.dropbox { position: relative; margin-left: 27px; }
.dropbox b { position: absolute; left: 0; top: 9px; width: 13px; height: 13px; border-radius: 3px; background: #d9092b; font-size: 11px; line-height: 13px; text-align: center; }
.status { display: flex; gap: 12px; margin-left: 24px; }
.clock { width: 106px; display: flex; flex-direction: column; text-align: right; line-height: 24px; }
</style>
